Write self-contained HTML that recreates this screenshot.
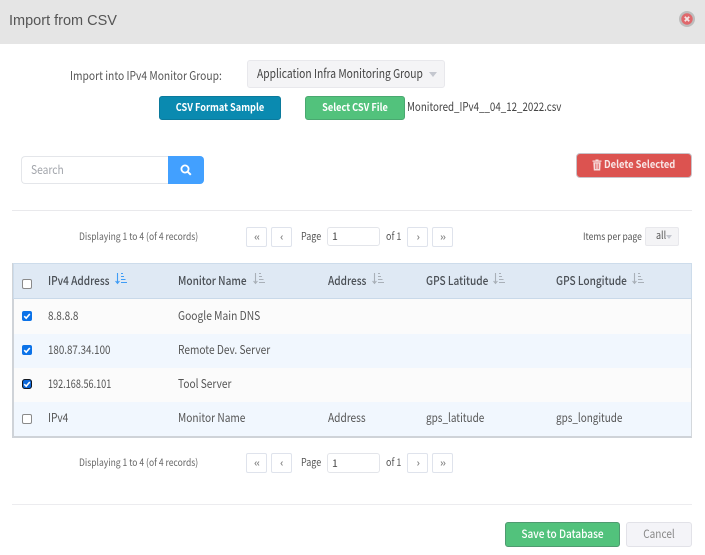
<!DOCTYPE html>
<html><head><meta charset="utf-8">
<style>
html,body{margin:0;padding:0;background:#fff}
#p{position:relative;width:705px;height:555px;overflow:hidden;background:#fff;font-family:"Noto Sans CJK SC","Liberation Sans",sans-serif;color:#555;font-size:12px}
#p div{position:absolute;box-sizing:border-box;white-space:nowrap}
.t{line-height:16px;height:16px;transform:scaleX(.855);transform-origin:0 50%}
.btn{border-radius:3px;color:#fff;font-weight:700;font-size:10.5px;text-align:center}
.btn span,.cn span{display:block;transform:scaleX(.875)}
.pg{width:21px;height:20px;border:1px solid #dfe3ec;border-radius:2px;background:#fff}
.pg svg{left:5px;top:5px}
.th{font-size:12px;font-weight:500;color:#4a4f55;line-height:16px;height:16px;transform:scaleX(.84);transform-origin:0 50%}
.td{font-size:12px;color:#555;line-height:16px;height:16px;transform:scaleX(.845);transform-origin:0 50%}
.cb{width:10px;height:10px;border:1px solid #8a8a8a;border-radius:2px;background:#fff}
.ck{width:10px;height:10px;border-radius:2px;background:#0b72e8}
svg{position:absolute;display:block}
</style></head><body><div id="p">

<div style="left:0;top:0;width:705px;height:44px;background:#e5e5e5"></div>
<div style="left:9px;top:10px;height:22px;line-height:22px;font-family:'Liberation Sans',sans-serif;font-size:14.5px;color:#555">Import from CSV</div>
<svg style="left:679px;top:11px" width="16" height="16" viewBox="0 0 16 16"><circle cx="8" cy="8" r="8" fill="#bdbdbd"/><circle cx="8" cy="8" r="5.7" fill="#e0686c"/><path d="M5.8 5.8l4.4 4.4M10.2 5.8l-4.4 4.4" stroke="#f4e4e4" stroke-width="1.8"/></svg>

<div class="t" style="left:70px;top:68px;font-size:12px;color:#555">Import into IPv4 Monitor Group:</div>
<div style="left:247px;top:60px;width:198px;height:28px;background:#f4f4f6;border:1px solid #e8e8ec;border-radius:3px"></div>
<div class="t" style="left:257px;top:65px;font-size:12.3px;color:#444;transform:scaleX(.835)">Application Infra Monitoring Group</div>
<svg style="left:429px;top:72px" width="8" height="5" viewBox="0 0 8 5"><path d="M0 0h8L4 5z" fill="#c4c7cf"/></svg>

<div class="btn" style="left:159px;top:96px;width:122px;height:24px;line-height:22px;background:#0a8ab0;border:1px solid #0b7a9c"><span>CSV Format Sample</span></div>
<div class="btn" style="left:305px;top:96px;width:100px;height:24px;line-height:22px;background:#52c27c;border:1px solid #4aa870"><span>Select CSV File</span></div>
<div class="t" style="left:407px;top:99px;font-size:12px;color:#444;transform:scaleX(.813)">Monitored_IPv4__04_12_2022.csv</div>

<div style="left:21px;top:156px;width:148px;height:28px;border:1px solid #e4e6ea;border-right:0;border-radius:4px 0 0 4px;background:#fff"></div>
<div class="t" style="left:31px;top:162px;font-size:12px;color:#a2a5ab">Search</div>
<div style="left:168px;top:156px;width:36px;height:28px;background:#42a0ff;border-radius:0 4px 4px 0"></div>
<svg style="left:180px;top:164px" width="12" height="12" viewBox="0 0 12 12"><circle cx="5" cy="5" r="3.6" fill="none" stroke="#fff" stroke-width="1.8"/><path d="M7.8 7.8l3 3" stroke="#fff" stroke-width="2"/></svg>

<div style="left:576px;top:153px;width:116px;height:25px;background:#dc5350;border:1px solid #c9c2c8;border-radius:4px"></div>
<svg style="left:592px;top:159px" width="10" height="12" viewBox="0 0 10 12"><path d="M0.5 1.5h9v1.2h-9zM3.5 0.5h3v1h-3zM1.3 3.2h7.4l-.5 8.3H1.8z" fill="#f6dcdb"/><path d="M3.4 4.5v5.5M5 4.5v5.5M6.6 4.5v5.5" stroke="#dc5350" stroke-width=".6"/></svg>
<div class="t" style="left:604px;top:157px;font-size:10.5px;font-weight:700;color:#f8e6e6;transform:scaleX(.89)">Delete Selected</div>

<div style="left:12px;top:210px;width:680px;height:1px;background:#e9e9ec"></div>

<div class="t" style="left:79px;top:228px;font-size:10px;color:#666">Displaying 1 to 4 (of 4 records)</div>
<div class="pg" style="left:246px;top:227px"><svg width="10" height="9" viewBox="0 0 10 9"><path d="M4.5 2.5L3 4.5l1.500 2M7 2.500L5.500 4.500l1.500 2" fill="none" stroke="#888" stroke-width="1"/></svg></div>
<div class="pg" style="left:271px;top:227px"><svg width="10" height="9" viewBox="0 0 10 9"><path d="M5.500 2.500L4 4.500l1.500 2" fill="none" stroke="#888" stroke-width="1"/></svg></div>
<div class="t" style="left:301px;top:229px;font-size:10.5px;color:#555">Page</div>
<div style="left:327px;top:227px;width:53px;height:19px;border:1px solid #e3e5ea;border-radius:3px;font-size:10.5px;line-height:18px;padding-left:4px;color:#444">1</div>
<div class="t" style="left:386px;top:229px;font-size:10.5px;color:#555">of 1</div>
<div class="pg" style="left:407px;top:227px"><svg width="10" height="9" viewBox="0 0 10 9"><path d="M4.500 2.500L6 4.500l-1.500 2" fill="none" stroke="#888" stroke-width="1"/></svg></div>
<div class="pg" style="left:432px;top:227px"><svg width="10" height="9" viewBox="0 0 10 9"><path d="M3 2.500L4.500 4.500 3 6.500M5.500 2.500L7 4.500l-1.500 2" fill="none" stroke="#888" stroke-width="1"/></svg></div>
<div class="t" style="left:583px;top:228px;font-size:10px;color:#555">Items per page</div>
<div style="left:645px;top:227px;width:34px;height:19px;background:#f4f4f6;border:1px solid #e8e8ec;border-radius:2px"></div>
<div class="t" style="left:656px;top:228px;font-size:10.5px;color:#555">all</div>
<svg style="left:666px;top:235px" width="6" height="4" viewBox="0 0 6 4"><path d="M0 0h6L3 4z" fill="#c4c7cf"/></svg>

<!-- table -->
<div style="left:12px;top:263px;width:680px;height:175px;border:1px solid #c9d8e6;border-left:2px solid #cfd3d8;border-right:1px solid #d4d8dc;border-bottom:2px solid #cfd3d8;background:#fbfbfb"></div>
<div style="left:13px;top:263px;width:679px;height:36px;background:#dfe9f4;border:1px solid #cddceb;border-bottom:1px solid #c9d9e9"></div>
<div style="left:14px;top:334px;width:677px;height:34px;background:#f1f7fe"></div>
<div style="left:14px;top:402px;width:677px;height:34px;background:#f1f7fe"></div>

<div class="cb" style="left:22px;top:279px"></div>
<div class="th" style="left:48px;top:273px">IPv4 Address</div>
<div class="th" style="left:178px;top:273px">Monitor Name</div>
<div class="th" style="left:328px;top:273px">Address</div>
<div class="th" style="left:426px;top:273px">GPS Latitude</div>
<div class="th" style="left:556px;top:273px">GPS Longitude</div>

<svg style="left:115px;top:272px" width="12" height="13" viewBox="0 0 12 13"><path d="M2.500 1v10M0.600 9l1.900 2.400L4.400 9" fill="none" stroke="#3f9cf5" stroke-width="1.100"/><path d="M6 1.500h2M6 4.500h3M6 7.500h4.500M6 10.500h6" stroke="#3f9cf5" stroke-width="1.100"/></svg>
<svg style="left:253px;top:272px" width="12" height="13" viewBox="0 0 12 13"><path d="M2.500 1v10M0.600 9l1.900 2.400L4.400 9" fill="none" stroke="#a9b0b8" stroke-width="1.100"/><path d="M6 1.500h2M6 4.500h3M6 7.500h4.500M6 10.500h6" stroke="#a9b0b8" stroke-width="1.100"/></svg>
<svg style="left:372px;top:272px" width="12" height="13" viewBox="0 0 12 13"><path d="M2.500 1v10M0.600 9l1.900 2.400L4.400 9" fill="none" stroke="#a9b0b8" stroke-width="1.100"/><path d="M6 1.500h2M6 4.500h3M6 7.500h4.500M6 10.500h6" stroke="#a9b0b8" stroke-width="1.100"/></svg>
<svg style="left:493px;top:272px" width="12" height="13" viewBox="0 0 12 13"><path d="M2.500 1v10M0.600 9l1.900 2.400L4.400 9" fill="none" stroke="#a9b0b8" stroke-width="1.100"/><path d="M6 1.500h2M6 4.500h3M6 7.500h4.500M6 10.500h6" stroke="#a9b0b8" stroke-width="1.100"/></svg>
<svg style="left:632px;top:272px" width="12" height="13" viewBox="0 0 12 13"><path d="M2.500 1v10M0.600 9l1.900 2.400L4.400 9" fill="none" stroke="#a9b0b8" stroke-width="1.100"/><path d="M6 1.500h2M6 4.500h3M6 7.500h4.500M6 10.500h6" stroke="#a9b0b8" stroke-width="1.100"/></svg>

<div class="ck" style="left:22px;top:311px"></div>
<svg style="left:22px;top:311px" width="10" height="10" viewBox="0 0 10 10"><path d="M2.200 5.200l2 2 3.600-4.200" fill="none" stroke="#fff" stroke-width="1.600"/></svg>
<div class="td" style="left:48px;top:308px;transform:scaleX(.83)">8.8.8.8</div>
<div class="td" style="left:178px;top:308px;transform:scaleX(.855)">Google Main DNS</div>

<div class="ck" style="left:22px;top:345px"></div>
<svg style="left:22px;top:345px" width="10" height="10" viewBox="0 0 10 10"><path d="M2.200 5.200l2 2 3.600-4.200" fill="none" stroke="#fff" stroke-width="1.600"/></svg>
<div class="td" style="left:48px;top:342px;transform:scaleX(.815)">180.87.34.100</div>
<div class="td" style="left:178px;top:342px">Remote Dev. Server</div>

<div class="ck" style="left:22px;top:379px;background:#0b66d8;outline:1.500px solid #15171c;outline-offset:-1px;border-radius:3px"></div>
<svg style="left:22px;top:379px" width="10" height="10" viewBox="0 0 10 10"><path d="M2.200 5.200l2 2 3.600-4.200" fill="none" stroke="#fff" stroke-width="1.600"/></svg>
<div class="td" style="left:48px;top:376px;transform:scaleX(.76)">192.168.56.101</div>
<div class="td" style="left:178px;top:376px">Tool Server</div>

<div class="cb" style="left:22px;top:414px"></div>
<div class="td" style="left:48px;top:410px">IPv4</div>
<div class="td" style="left:178px;top:410px">Monitor Name</div>
<div class="td" style="left:328px;top:410px">Address</div>
<div class="td" style="left:426px;top:410px;transform:scaleX(.83)">gps_latitude</div>
<div class="td" style="left:556px;top:410px;transform:scaleX(.825)">gps_longitude</div>

<div class="t" style="left:79px;top:454px;font-size:10px;color:#666">Displaying 1 to 4 (of 4 records)</div>
<div class="pg" style="left:246px;top:453px"><svg width="10" height="9" viewBox="0 0 10 9"><path d="M4.500 2.500L3 4.500l1.500 2M7 2.500L5.500 4.500l1.500 2" fill="none" stroke="#888" stroke-width="1"/></svg></div>
<div class="pg" style="left:271px;top:453px"><svg width="10" height="9" viewBox="0 0 10 9"><path d="M5.500 2.500L4 4.500l1.500 2" fill="none" stroke="#888" stroke-width="1"/></svg></div>
<div class="t" style="left:301px;top:455px;font-size:10.5px;color:#555">Page</div>
<div style="left:327px;top:453px;width:53px;height:20px;border:1px solid #e3e5ea;border-radius:3px;font-size:10.5px;line-height:19px;padding-left:4px;color:#444">1</div>
<div class="t" style="left:386px;top:455px;font-size:10.5px;color:#555">of 1</div>
<div class="pg" style="left:407px;top:453px"><svg width="10" height="9" viewBox="0 0 10 9"><path d="M4.500 2.500L6 4.500l-1.500 2" fill="none" stroke="#888" stroke-width="1"/></svg></div>
<div class="pg" style="left:432px;top:453px"><svg width="10" height="9" viewBox="0 0 10 9"><path d="M3 2.500L4.500 4.500 3 6.500M5.500 2.500L7 4.500l-1.500 2" fill="none" stroke="#888" stroke-width="1"/></svg></div>

<div style="left:12px;top:504px;width:680px;height:1px;background:#ececef"></div>

<div class="btn" style="left:505px;top:522px;width:115px;height:25px;line-height:23px;background:#52c27c;border:1px solid #4f9a70;font-size:11.5px;font-weight:500"><span>Save to Database</span></div>
<div class="cn" style="left:626px;top:522px;width:66px;height:25px;line-height:23px;text-align:center;background:#f4f4f8;border:1px solid #e2e2e8;border-radius:3px;font-size:11.5px;color:#888"><span>Cancel</span></div>

</div></body></html>
